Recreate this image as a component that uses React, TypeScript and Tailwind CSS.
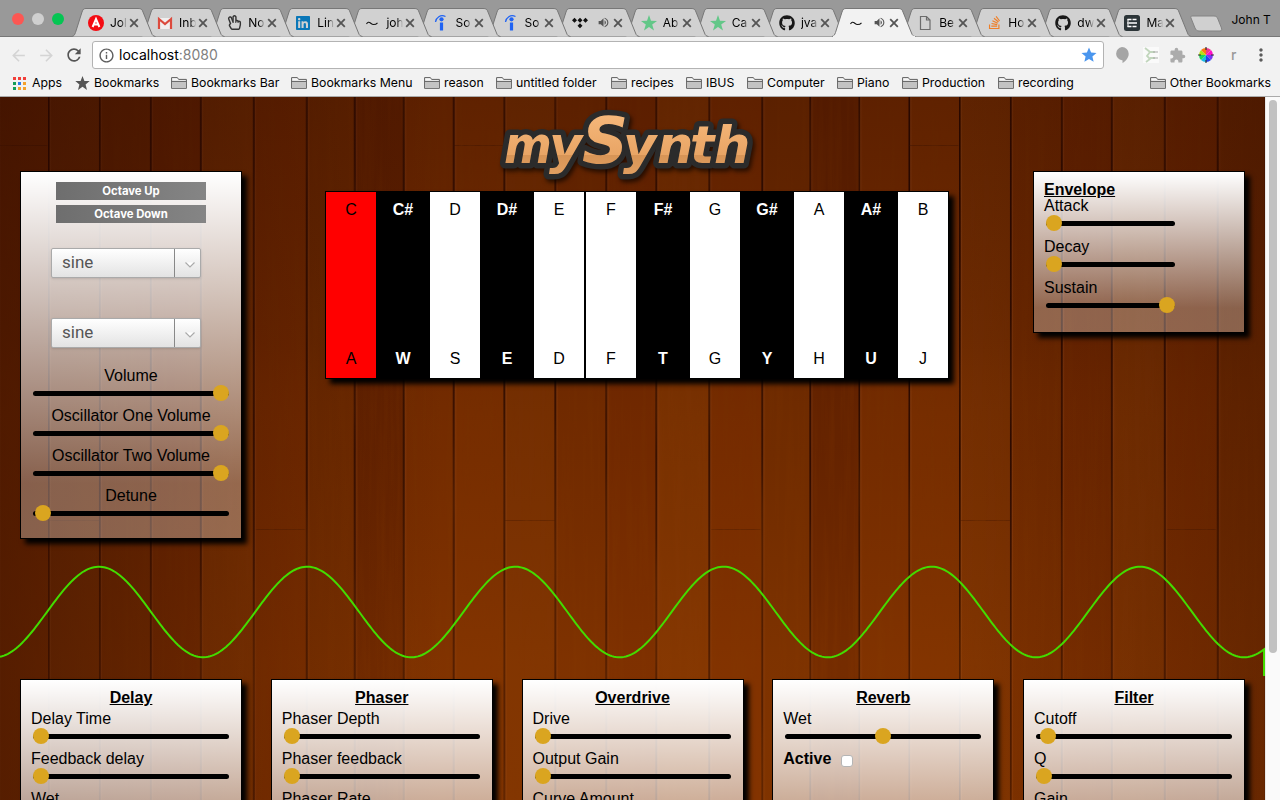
import React from "react";
import { FaGithub, FaLinkedin, FaRegHandPeace, FaStackOverflow } from "react-icons/fa";
import { MdArrowBack, MdArrowForward, MdExtension, MdInfoOutline, MdMoreVert, MdRefresh, MdStar, MdVolumeUp } from "react-icons/md";

/* ---------- browser icons ---------- */

const AngelIcon = () => (
  <svg width="16" height="16" viewBox="0 0 16 16">
    <circle cx="8" cy="8" r="8" fill="#f40b12" />
    <path d="M4.600 12 8 4l3.400 8M6 9.600h4" fill="none" stroke="#fff" strokeWidth="2" />
  </svg>
);

const GmailIcon = () => (
  <svg width="16" height="16" viewBox="0 0 16 16">
    <rect x="1" y="3" width="14" height="11" fill="#f1efef" />
    <path d="M2 14V4l6 5 6-5v10" fill="none" stroke="#dc4a3d" strokeWidth="2.200" />
  </svg>
);

const SquiggleIcon = () => (
  <svg width="16" height="16" viewBox="0 0 16 16">
    <path d="M2.500 9C3.500 7 5 6.800 6.500 8S8.300 9.500 9.500 9.500 12.500 9 13.500 7.800" fill="none" stroke="#111" strokeWidth="1.100" />
  </svg>
);

const IndeedIcon = () => (
  <svg width="16" height="16" viewBox="0 0 16 16">
    <circle cx="8.500" cy="4.300" r="2.100" fill="#2164f3" />
    <path d="M8.500 7.500v8" stroke="#2164f3" strokeWidth="3.200" />
    <path d="M2.500 7C3 2.500 7.500-.8 12.500 1.500" fill="none" stroke="#2164f3" strokeWidth="1.300" />
  </svg>
);

const TidalIcon = () => (
  <svg width="16" height="16" viewBox="0 0 16 16" fill="#111">
    <path d="M2.500 2.700 5 5.200 2.500 7.700 0 5.200zM8 2.700l2.500 2.500L8 7.700 5.500 5.200zM13.500 2.700 16 5.200l-2.500 2.500L11 5.200zM8 8.200l2.500 2.500L8 13.200l-2.500-2.500z" />
  </svg>
);

const GreenStarIcon = () => (
  <svg width="16" height="16" viewBox="0 0 16 16" fill="#63c788">
    <path d="M8 0l2 5.800 6 .1-4.800 3.600L13 15.500 8 12l-5 3.500 1.800-6L0 5.900l6-.1z" />
  </svg>
);

const PageIcon = () => (
  <svg width="16" height="16" viewBox="0 0 16 16">
    <path d="M3.500 1.500h6l3.500 3.500v9.500H3.500zM9.500 1.500V5H13" fill="none" stroke="#6b6b6b" strokeWidth="1.200" />
  </svg>
);

const MakerIcon = () => (
  <svg width="16" height="16" viewBox="0 0 16 16">
    <rect width="16" height="16" rx="2.500" fill="#2c3538" />
    <path d="M3.500 4.500h4M8.500 4.500h4M3 8h10M3.500 11.500h4M8.500 11.500h4" stroke="#fff" strokeWidth="1.700" />
    <path d="M4 4v3M4 9v3" stroke="#fff" />
  </svg>
);

const CloseIcon = () => (
  <svg width="10" height="10" viewBox="0 0 10 10">
    <path d="M1.200 1.200l7.600 7.600M8.800 1.200 1.200 8.800" stroke="#555" strokeWidth="1.800" />
  </svg>
);

const FolderIcon = () => (
  <svg className="shrink-0" width="16" height="14" viewBox="0 0 16 14">
    <path d="M.6 12.400V1.600h5.800l1.200 1.800h7.800v9z" fill="#f7f7f7" stroke="#5f5f5f" strokeWidth="1" />
    <path d="M1 5.600h14v6.500H1z" fill="#c3c3c3" />
    <path d="M.6 5.400h14.800" stroke="#5f5f5f" />
  </svg>
);

const AppsIcon = () => (
  <svg className="shrink-0" width="13" height="13" viewBox="0 0 13 13">
    <path d="M0 0h3v3H0zM5 0h3v3H5zM10 0h3v3h-3z" fill="#f2403a" />
    <path d="M0 5h3v3H0zM0 10h3v3H0z" fill="#159d58" />
    <path d="M5 5h3v3H5z" fill="#2b7bea" />
    <path d="M10 5h3v3h-3zM5 10h3v3H5zM10 10h3v3h-3z" fill="#f4a12c" />
  </svg>
);

const ColorWheelIcon = () => (
  <svg width="16" height="16" viewBox="-8 -8 16 16">
    <path d="M0 0V-7A7 7 0 0 1 5-5z" fill="#f0368c" />
    <path d="M0 0 5-5A7 7 0 0 1 7 0z" fill="#ff10c8" />
    <path d="M0 0H7A7 7 0 0 1 5 5z" fill="#7a35f3" />
    <path d="M0 0 5 5A7 7 0 0 1 0 7z" fill="#2440f0" />
    <path d="M0 0V7A7 7 0 0 1-5 5z" fill="#19bce8" />
    <path d="M0 0-5 5A7 7 0 0 1-7 0z" fill="#1cd65c" />
    <path d="M0 0H-7A7 7 0 0 1-5-5z" fill="#b5df18" />
    <path d="M0 0-5-5A7 7 0 0 1 0-7z" fill="#ff7a10" />
    <path d="M0-8v3M0 5v3M-8 0h3M5 0h3" stroke="#333" strokeWidth="1.200" />
  </svg>
);

/* ---------- browser chrome ---------- */

type TabInfo = { title?: string; icon: React.ReactNode; audio?: boolean; active?: boolean };

const tabs: TabInfo[] = [
  { title: "Jol", icon: <AngelIcon /> },
  { title: "Inb", icon: <GmailIcon /> },
  { title: "No", icon: <FaRegHandPeace size={15} color="#333" /> },
  { title: "Lin", icon: <FaLinkedin size={16} color="#0a77b8" /> },
  { title: "joh", icon: <SquiggleIcon /> },
  { title: "So", icon: <IndeedIcon /> },
  { title: "So", icon: <IndeedIcon /> },
  { icon: <TidalIcon />, audio: true },
  { title: "Ab", icon: <GreenStarIcon /> },
  { title: "Ca", icon: <GreenStarIcon /> },
  { title: "jva", icon: <FaGithub size={16} color="#181818" /> },
  { icon: <SquiggleIcon />, audio: true, active: true },
  { title: "Be", icon: <PageIcon /> },
  { title: "Ho", icon: <FaStackOverflow size={15} color="#ef7f27" /> },
  { title: "dw", icon: <FaGithub size={16} color="#181818" /> },
  { title: "Ma", icon: <MakerIcon /> },
];

function Tab({ tab, order }: { tab: TabInfo; order: number }) {
  return (
    <div className="relative h-[29px] w-[69.100px] shrink-0" style={{ zIndex: tab.active ? 40 : order }}>
      <svg className="absolute left-0 top-0" width="86" height="29" viewBox="0 0 86 29">
        <path
          d="M0 28.500C2 28 2.500 27 3.500 24.500L10 4C11 1 12 .5 14 .5H66C69 .5 70 1 71 4L79.500 25C80.500 27.500 81 28 83.500 28.500"
          fill={tab.active ? "#f2f2f2" : "#d1d1d1"}
          stroke="#777"
        />
        {tab.active && <path d="M1 28.500H83" stroke="#f2f2f2" strokeWidth="1.500" />}
      </svg>
      <div className="relative flex h-full items-center pl-4">
        <span className="flex w-4 shrink-0 justify-center">{tab.icon}</span>
        <span className="ml-[6px] flex h-5 w-[18px] shrink-0 items-center whitespace-nowrap [mask-image:linear-gradient(to_right,black_60%,transparent_95%)]">
          {tab.title}
        </span>
        <span className="ml-px flex shrink-0">
          <CloseIcon />
        </span>
        {tab.audio && <MdVolumeUp className="absolute left-[41px] top-[8px]" size={13} color="#555" />}
      </div>
    </div>
  );
}

const bookmarks = [
  { label: "Bookmarks Bar", width: "w-[120px]" },
  { label: "Bookmarks Menu", width: "w-[133px]" },
  { label: "reason", width: "w-[72px]" },
  { label: "untitled folder", width: "w-[115px]" },
  { label: "recipes", width: "w-[75px]" },
  { label: "IBUS", width: "w-[61px]" },
  { label: "Computer", width: "w-[90px]" },
  { label: "Piano", width: "w-[65px]" },
  { label: "Production", width: "w-[96px]" },
  { label: "recording", width: "w-[90px]" },
];

function BrowserChrome() {
  return (
    <header className="h-[97px] shrink-0 border-b border-[#aaa] bg-[#f2f2f2] font-[Inter,sans-serif] text-black">
      <div className="flex h-[37px] border-b border-[#777] bg-[#999] pt-2 text-xs">
        <div className="flex w-[72px] shrink-0 gap-2 pl-3 pt-[5px]">
          <span className="size-3 rounded-full bg-[#fc5753]" />
          <span className="size-3 rounded-full bg-[#cfcfcf]" />
          <span className="size-3 rounded-full bg-[#05c553]" />
        </div>
        {tabs.map((tab, i) => (
          <Tab key={i} tab={tab} order={30 - i} />
        ))}
        <svg className="ml-[11px] mt-[7px] shrink-0" width="34" height="18" viewBox="0 0 34 18">
          <path d="M3 1H25C27 1 28 2 28.500 3L32.500 13C33 15 32.500 16 31 16H10C8 16 7 15 6 13L2 3C1.500 2 2 1 3 1Z" fill="#d0d0d0" stroke="#838383" />
        </svg>
        <span className="ml-[9px] mt-[4px] whitespace-nowrap">John T</span>
      </div>

      <div className="flex h-[36px] items-center">
        <div className="flex w-[92px] items-center pl-[9px]">
          <MdArrowBack size={19} color="#d4d4d4" />
          <MdArrowForward className="ml-[9px]" size={19} color="#d4d4d4" />
          <MdRefresh className="ml-[8px]" size={20} color="#555" />
        </div>
        <div className="flex h-7 w-[1012px] items-center rounded-[3px] border border-[#b3b3b3] bg-white pl-[5px] pr-[5px] text-sm">
          <MdInfoOutline size={17} color="#5d5d5d" />
          <span className="ml-[4px]">localhost<span className="text-[#808080]">:8080</span></span>
          <MdStar className="ml-auto" size={18} color="#4a96ee" />
        </div>
        <div className="flex flex-1 items-center">
          <svg className="ml-[11px]" width="14" height="16" viewBox="0 0 14 16">
            <path d="M7 0a6.700 6.700 0 0 1 6.700 6.700C13.700 10.500 11 14 7.500 16v-2.700H7A6.700 6.700 0 0 1 7 0z" fill="#a5a5a5" />
          </svg>
          <svg className="ml-[14px]" width="16" height="16" viewBox="0 0 16 16">
            <path d="M0 0h16v16H0z" fill="#fafafa" />
            <path d="M2 1 7 5 4 9l3 3-4 3M7 5h5M7 11h5" fill="none" stroke="#c2d6bd" strokeWidth="1.800" />
            <path d="M10 5h5M10 11h5" stroke="#aaa" />
          </svg>
          <MdExtension className="ml-[10px]" size={17} color="#ababab" />
          <span className="ml-[12px]"><ColorWheelIcon /></span>
          <span className="ml-[17px] text-sm font-medium text-[#999]">r</span>
          <MdMoreVert className="ml-[15px]" size={20} color="#5b5b5b" />
        </div>
      </div>

      <div className="flex h-[20px] items-center whitespace-nowrap text-[12.300px]">
        <div className="flex w-[75px] items-center gap-1.5 pl-[13px]"><AppsIcon />Apps</div>
        <div className="flex w-[96px] items-center gap-1">
          <svg width="15" height="14" viewBox="0 0 15 14"><path d="M7.500 0l1.900 4.900 5.300.2-4.100 3.300L12 14 7.500 10.700 3 14l1.400-5.600L.3 5.100l5.300-.2z" fill="#555" /></svg>
          Bookmarks
        </div>
        {bookmarks.map((b) => (
          <div key={b.label} className={`flex shrink-0 items-center gap-1 ${b.width}`}><FolderIcon />{b.label}</div>
        ))}
        <div className="ml-auto flex items-center gap-1 pr-[9px]"><FolderIcon />Other Bookmarks</div>
      </div>
    </header>
  );
}

/* ---------- wooden backdrop ---------- */

const planks = [
  { x: 0, w: 51, fill: "#752f02" },
  { x: 51, w: 51, fill: "#702a00" },
  { x: 102, w: 50, fill: "#702800" },
  { x: 152, w: 53, fill: "#7a3202" },
  { x: 205, w: 53, fill: "#752b00" },
  { x: 258, w: 48, fill: "#6f2b00" },
  { x: 306, w: 49, fill: "#632200" },
  { x: 355, w: 50, fill: "#732b00" },
  { x: 405, w: 51, fill: "#762d00" },
];

function WoodBackdrop() {
  return (
    <svg className="absolute inset-0" width="1265" height="703" aria-hidden="true">
      <defs>
        <pattern id="planks" x="48" width="455.500" height="703" patternUnits="userSpaceOnUse">
          {planks.map((p) => (
            <g key={p.x}>
              <rect x={p.x} width={p.w + 1} height="703" fill={p.fill} />
              <rect x={p.x} width="1.600" height="703" fill="#230600" />
              <rect x={p.x + 2} width="1" height="703" fill="#a45b30" opacity=".28" />
            </g>
          ))}
          <path d="M1 423.500h50M208 432.500h49M405 48.500h50" stroke="#381000" opacity=".4" />
        </pattern>
        <filter id="grain" x="0" y="0" width="100%" height="100%">
          <feTurbulence type="fractalNoise" baseFrequency=".17 .006" numOctaves="4" seed="8" />
          <feColorMatrix values="0 0 0 0 .18  0 0 0 0 .03  0 0 0 0 0  1.800 0 0 0 -.72" />
        </filter>
        <linearGradient id="depth" x1="0" y1="0" x2="0" y2="1">
          <stop offset="0" stopColor="#300a00" stopOpacity=".32" />
          <stop offset=".35" stopColor="#300a00" stopOpacity=".1" />
          <stop offset=".5" stopColor="#9a4000" stopOpacity=".04" />
          <stop offset=".8" stopColor="#a34600" stopOpacity=".28" />
          <stop offset="1" stopColor="#a34600" stopOpacity=".3" />
        </linearGradient>
        <linearGradient id="sides">
          <stop offset="0" stopColor="#2c0800" stopOpacity=".52" />
          <stop offset=".35" stopColor="#2c0800" stopOpacity="0" />
          <stop offset=".75" stopColor="#2c0800" stopOpacity="0" />
          <stop offset="1" stopColor="#2c0800" stopOpacity=".28" />
        </linearGradient>
      </defs>
      <rect width="1265" height="703" fill="url(#planks)" />
      <rect width="1265" height="703" filter="url(#grain)" opacity=".5" />
      <rect width="1265" height="703" fill="url(#depth)" />
      <rect width="1265" height="703" fill="url(#sides)" />
    </svg>
  );
}

/* ---------- synth controls ---------- */

function Panel({ className, children }: { className: string; children: React.ReactNode }) {
  return (
    <section className={`border border-black bg-linear-to-b from-white to-white/30 to-85% shadow-[5px_5px_5px_#000] ${className}`}>
      {children}
    </section>
  );
}

function Slider({ label, value, short = false }: { label: string; value: number; short?: boolean }) {
  const length = short ? 129 : 196;
  return (
    <div className={short ? "h-[41px]" : "h-10"}>
      <div className={`whitespace-nowrap ${short ? "h-[17px] leading-[18px]" : "h-[18px] leading-[20px]"}`}>{label}</div>
      <div className={`relative ml-[2px] flex h-[18px] items-center ${short ? "w-[129px]" : "w-[196px]"}`}>
        <span className="h-[5px] w-full rounded-full bg-black" />
        <span className="absolute top-px size-4 rounded-full bg-[#daa520]" style={{ left: value * (length - 16) }} />
      </div>
    </div>
  );
}

function WaveSelect() {
  return (
    <div className="mx-auto flex h-[30px] w-[150px] items-stretch rounded-[2px] border border-[#aaa] bg-linear-to-b from-white to-[#e3e3e3] text-[#555] shadow-sm">
      <span className="flex flex-1 items-center border-r border-[#888] pl-[10px] font-[Roboto,sans-serif] text-[17px]">sine</span>
      <span className="flex w-[25px] items-center justify-center pl-1 pt-1">
        <svg width="10" height="6" viewBox="0 0 10 6"><path d="M.5.5 5 5 9.500.5" fill="#fff" stroke="#aaa" strokeWidth="1.200" /></svg>
      </span>
    </div>
  );
}

const keys = [
  ["C", "A"], ["C#", "W"], ["D", "S"], ["D#", "E"], ["E", "D"], ["F", "F"],
  ["F#", "T"], ["G", "G"], ["G#", "Y"], ["A", "H"], ["A#", "U"], ["B", "J"],
];

function Piano() {
  return (
    <div className="flex h-[188px] w-[624px] shadow-[5px_5px_5px_#000]">
      {keys.map(([note, key], i) => {
        const tone = note.includes("#") ? "bg-black font-bold text-white" : i === 0 ? "bg-[#f00]" : "bg-white";
        return (
          <div key={note} className={`flex w-[52px] flex-col items-center justify-between border border-black pb-[10px] pt-[9px] leading-[18px] ${tone}`}>
            <span>{note}</span>
            <span>{key}</span>
          </div>
        );
      })}
    </div>
  );
}

function Logo() {
  const glyphs = (
    <>
      <tspan fontFamily="DejaVu Sans Condensed, DejaVu Sans, sans-serif">m</tspan>y<tspan fontSize="64">S</tspan>ynth
    </>
  );
  const shared = { x: "9 54 87 128 162 195 219", y: 66, fontSize: 51 };
  return (
    <svg className="block" width="270" height="94" viewBox="0 0 270 94" fontFamily="DejaVu Sans, sans-serif" fontWeight="700" fontStyle="italic" strokeLinejoin="round">
      <defs>
        <linearGradient id="amber" gradientUnits="userSpaceOnUse" x1="0" y1="16" x2="0" y2="88">
          <stop offset="0" stopColor="#f6b87b" />
          <stop offset=".58" stopColor="#e9a565" />
          <stop offset=".58" stopColor="#d79456" />
          <stop offset="1" stopColor="#e7a566" />
        </linearGradient>
      </defs>
      <text {...shared} fill="#2b2b2b" stroke="#2b2b2b" strokeWidth="11" className="drop-shadow-[2px_3px_2px_rgba(0,0,0,0.6)]" aria-hidden="true">{glyphs}</text>
      <text {...shared} fill="url(#amber)">{glyphs}</text>
    </svg>
  );
}

const WAVE_WIDTH = 1264;
const wavePath = Array.from({ length: WAVE_WIDTH / 2 + 1 }, (_, i) => {
  const x = i * 2;
  const y = 73 - 45.3 * Math.cos(((x - 99) / 208.2) * Math.PI * 2);
  return `${i ? "L" : "M"}${x} ${y.toFixed(2)}`;
}).join("");

const effects = [
  { name: "Delay", sliders: [["Delay Time", 0], ["Feedback delay", 0], ["Wet", 0]] },
  { name: "Phaser", sliders: [["Phaser Depth", 0], ["Phaser feedback", 0], ["Phaser Rate", 0]] },
  { name: "Overdrive", sliders: [["Drive", 0], ["Output Gain", 0], ["Curve Amount", 0]] },
  { name: "Reverb", sliders: [["Wet", 0.5]], toggle: true },
  { name: "Filter", sliders: [["Cutoff", 0.022], ["Q", 0], ["Gain", 0]] },
] as { name: string; sliders: [string, number][]; toggle?: boolean }[];

export default function App() {
  return (
    <div className="flex h-[800px] w-[1280px] flex-col overflow-hidden">
      <BrowserChrome />
      <div className="flex min-h-0 flex-1">
        <main className="relative w-[1265px] overflow-hidden bg-[#5a1e00] font-['Liberation_Sans',sans-serif] text-base text-black">
          <WoodBackdrop />
          <div className="relative">
            <div className="flex h-[442px] items-start pl-5">
              <Panel className="mt-[74px] h-[368px] w-[222px] pt-[10px]">
                <div className="flex flex-col gap-[5px] pl-[35px] font-[Inter,sans-serif] text-[11.300px] font-bold text-white">
                  <button className="h-[18px] w-[150px] bg-linear-to-r from-[#6e6e6e] to-[#858585] leading-[18px]">Octave Up</button>
                  <button className="h-[18px] w-[150px] bg-linear-to-r from-[#6e6e6e] to-[#858585] leading-[18px]">Octave Down</button>
                </div>
                <div className="mt-[25px] flex flex-col gap-10 pr-[10px]">
                  <WaveSelect />
                  <WaveSelect />
                </div>
                <div className="mt-[18px] pl-[10px] pr-[10px] text-center">
                  <Slider label="Volume" value={1} />
                  <Slider label="Oscillator One Volume" value={1} />
                  <Slider label="Oscillator Two Volume" value={1} />
                  <Slider label="Detune" value={0.01} />
                </div>
              </Panel>
              <div className="ml-[83px] w-[624px]">
                <div className="flex h-[94px] pl-[170px]"><Logo /></div>
                <Piano />
              </div>
              <Panel className="ml-[84px] mt-[74px] h-[162px] w-[212px] pl-[10px] pt-[9px]">
                <h2 className="h-[16px] font-bold leading-[18px] underline">Envelope</h2>
                <Slider label="Attack" value={0} short />
                <Slider label="Decay" value={0} short />
                <Slider label="Sustain" value={1} short />
              </Panel>
            </div>

            <svg className="block" width="1265" height="140" viewBox="0 0 1265 140">
              <path d={`${wavePath}V137`} fill="none" stroke="#43dc00" strokeWidth="2" />
            </svg>

            <div className="flex gap-[28.750px] pl-5">
              {effects.map((fx) => (
                <Panel key={fx.name} className="h-[250px] w-[222px] shrink-0 px-[10px] pt-[8px]">
                  <h2 className="h-[21px] text-center font-bold leading-[19px] underline">{fx.name}</h2>
                  {fx.sliders.map(([label, value]) => (
                    <Slider key={label} label={label} value={value} />
                  ))}
                  {fx.toggle && (
                    <label className="flex items-center font-bold leading-[20px]">
                      Active
                      <input type="checkbox" className="ml-[10px] mt-[3px] size-[12px] appearance-none rounded-[3px] border border-[#b5b5b5] bg-white" />
                    </label>
                  )}
                </Panel>
              ))}
            </div>
          </div>
        </main>
        <div className="w-[15px] border-l border-[#e8e8e8] bg-[#fafafa] pl-[3px] pt-[3px]">
          <div className="h-[553px] w-[8px] rounded-full bg-[#c1c1c1]" />
        </div>
      </div>
    </div>
  );
}
